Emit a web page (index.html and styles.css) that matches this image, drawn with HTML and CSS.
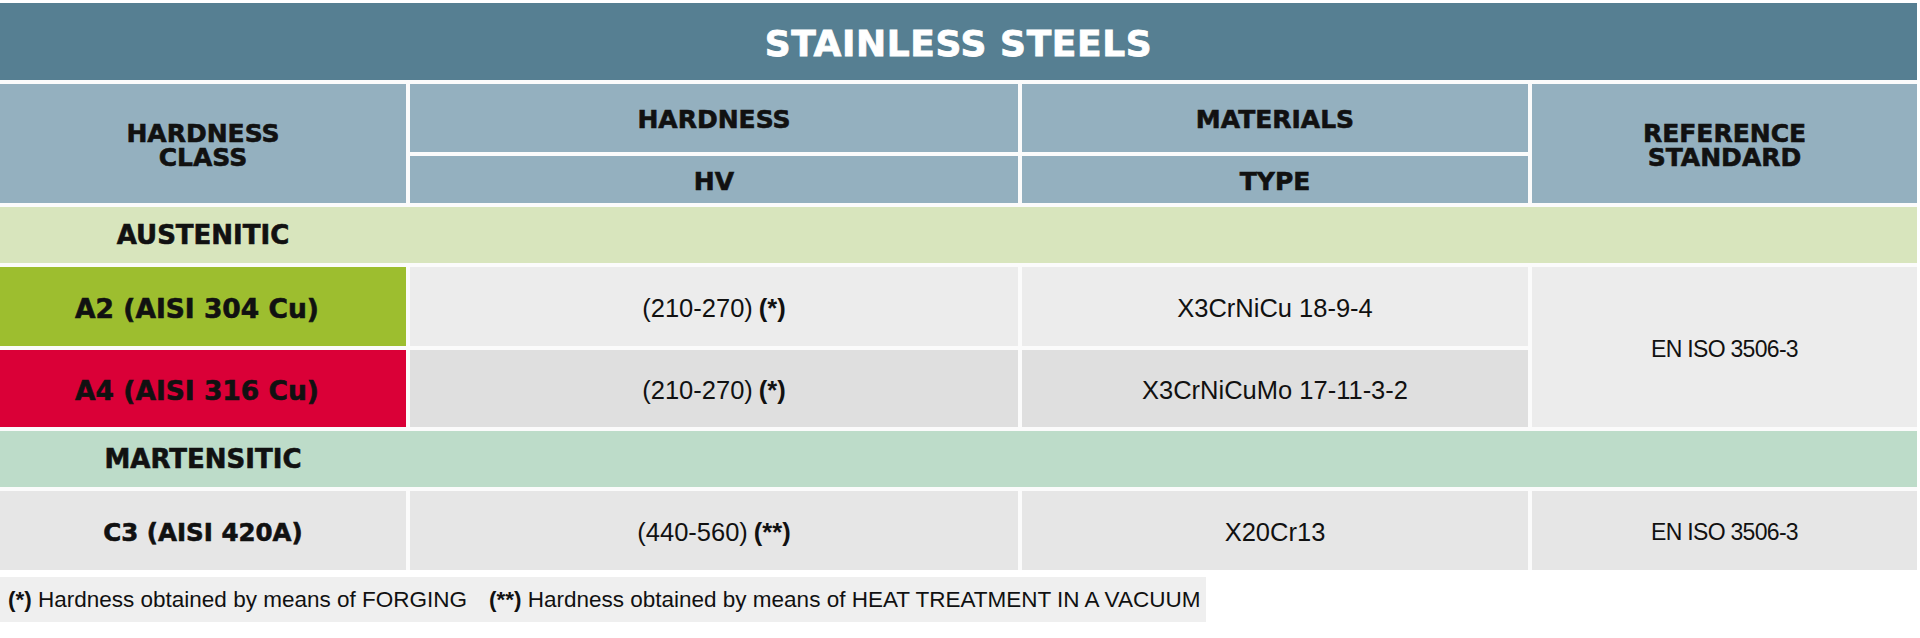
FILE: index.html
```html
<!DOCTYPE html>
<html lang="en">
<head>
<meta charset="utf-8">
<title>Stainless Steels</title>
<link rel="stylesheet" href="styles.css">
</head>
<body>
<div class="page">
  <div class="table">
    <div class="title">STAINLESS STEELS</div>

    <div class="hd hd-span"><span class="hd-lines"><span class="hd-line">HARDNESS</span><span class="hd-line">CLASS</span></span></div>
    <div class="hd">HARDNESS</div>
    <div class="hd">MATERIALS</div>
    <div class="hd hd-span"><span class="hd-lines"><span class="hd-line">REFERENCE</span><span class="hd-line">STANDARD</span></span></div>
    <div class="hd">HV</div>
    <div class="hd">TYPE</div>

    <div class="section section-aus"><span class="section-label">AUSTENITIC</span></div>

    <div class="cell label label-a2 label-shift">A2 (AISI 304 Cu)</div>
    <div class="cell val light">(210-270) <b>(*)</b></div>
    <div class="cell val light">X3CrNiCu 18-9-4</div>
    <div class="cell std light std-span">EN ISO 3506-3</div>

    <div class="cell label label-a4 label-shift">A4 (AISI 316 Cu)</div>
    <div class="cell val dark">(210-270) <b>(*)</b></div>
    <div class="cell val dark">X3CrNiCuMo 17-11-3-2</div>

    <div class="section section-mar"><span class="section-label">MARTENSITIC</span></div>

    <div class="cell label label-c3 mid">C3 (AISI 420A)</div>
    <div class="cell val mid">(440-560) <b>(**)</b></div>
    <div class="cell val mid">X20Cr13</div>
    <div class="cell std mid">EN ISO 3506-3</div>
  </div>

  <div class="footnote">
    <span class="note"><b>(*)</b> Hardness obtained by means of FORGING</span>
    <span class="note"><b>(**)</b> Hardness obtained by means of HEAT TREATMENT IN A VACUUM</span>
  </div>
</div>
</body>
</html>
```

FILE: styles.css
```css
html, body {
  margin: 0;
  padding: 0;
  background: #ffffff;
}

.page {
  width: 1920px;
  height: 638px;
  padding-top: 3px;
  box-sizing: border-box;
  background: #ffffff;
}

.table {
  width: 1917px;
  display: grid;
  grid-template-columns: 406px 608px 506px 385px;
  grid-template-rows: 77px 68px 47px 56px 79px 77px 56px 79px;
  column-gap: 4px;
  row-gap: 4px;
  background: #fbfbfb;
  color: #111;
}

.title {
  grid-column: 1 / -1;
  background: #567f92;
  color: #ffffff;
  font-family: "DejaVu Sans", sans-serif;
  font-weight: bold;
  font-size: 36px;
  letter-spacing: 0.6px;
  display: flex;
  align-items: center;
  justify-content: center;
  padding-top: 4px;
  -webkit-text-stroke: 0.8px #ffffff;
}

.hd {
  background: #94b0bf;
  font-family: "DejaVu Sans", sans-serif;
  font-weight: bold;
  font-size: 25px;
  line-height: 26px;
  display: flex;
  align-items: center;
  justify-content: center;
  text-align: center;
  -webkit-text-stroke: 0.6px #111;
  padding-top: 4px;
}

.hd-span {
  grid-row: span 2;
}

.hd-lines {
  display: flex;
  flex-direction: column;
  align-items: center;
}

.hd-line {
  display: block;
  line-height: 24px;
  height: 24px;
}

.section {
  grid-column: 1 / -1;
  display: flex;
  align-items: center;
  font-family: "DejaVu Sans", sans-serif;
  font-weight: bold;
  font-size: 26px;
  -webkit-text-stroke: 0.6px #111;
}

.section-aus {
  background: #d8e5bd;
}

.section-mar {
  background: #bddcc9;
}

.section-label {
  width: 406px;
  text-align: center;
}

.cell {
  display: flex;
  align-items: center;
  justify-content: center;
  padding-top: 4px;
  box-sizing: border-box;
  font-family: "Liberation Sans", Arial, sans-serif;
  color: #111;
}

.val {
  font-size: 25.5px;
}

.val b {
  margin-left: 6px;
  font-family: "Liberation Sans", Arial, sans-serif;
  font-weight: bold;
}

.std {
  font-size: 23px;
  letter-spacing: -0.7px;
}

.label {
  font-family: "DejaVu Sans", sans-serif;
  font-weight: bold;
  font-size: 26.5px;
  -webkit-text-stroke: 0.6px #111;
}

.label-shift {
  padding-right: 12px;
}

.label-c3 {
  font-size: 24.5px;
}

.label-a2 {
  background: #9dbe2f;
}

.label-a4 {
  background: #da0037;
}

.light {
  background: #ececec;
}

.dark {
  background: #dfdfdf;
}

.mid {
  background: #e6e6e6;
}

.std-span {
  grid-row: span 2;
}

.footnote {
  margin-top: 7px;
  width: 1206px;
  height: 45px;
  background: #efefef;
  display: flex;
  align-items: center;
  gap: 22px;
  padding-left: 8px;
  box-sizing: border-box;
  font-family: "Liberation Sans", Arial, sans-serif;
  font-size: 22.5px;
  color: #111;
}

.note b {
  font-family: "Liberation Sans", Arial, sans-serif;
  font-weight: bold;
}
```
